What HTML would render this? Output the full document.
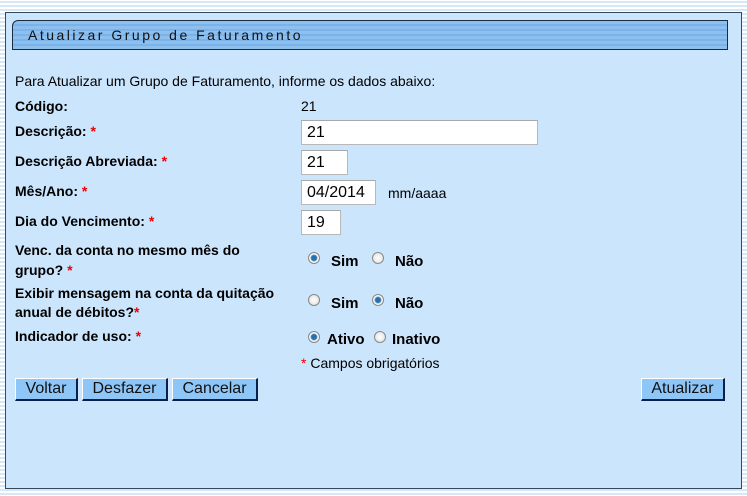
<!DOCTYPE html>
<html><head><meta charset="utf-8"><style>
*{margin:0;padding:0;box-sizing:border-box}
body{width:747px;height:496px;overflow:hidden;position:relative;font-family:"Liberation Sans",Arial,sans-serif;
background:repeating-linear-gradient(#fff 0 1px,#d6e8f7 1px 3px,#fff 3px 4px)}
#p{position:absolute;left:5px;top:12px;width:737px;height:477px;background:#cbe5fc;border:1px solid #33485e}
#h{position:absolute;left:12px;top:20px;width:716px;height:30px;border:1px solid #1d2c3c;border-radius:6px 0 0 0;
background:repeating-linear-gradient(#8ec0ef 0 3px,#7ab2ea 3px 5px)}
#h span{position:absolute;left:15px;top:6px;font-size:14px;letter-spacing:2.5px;color:#111}
.t{position:absolute;font-size:14px;color:#000;white-space:nowrap}
.b{font-weight:bold}
.r{color:#e00}
.in{position:absolute;height:25px;background:#fff;border:1px solid #b8b8b8;border-top-color:#a8a8a8;font-size:16px;padding:3px 0 0 5px}
.rd{position:absolute;width:12px;height:12px;border-radius:50%;border:1px solid #888;background:radial-gradient(circle,#fff,#ddd)}
.rd.on{background:radial-gradient(circle,#2a6fa8 0 2.5px,#6aa4d4 3px,#fff 4px,#ddd)}
.btn{position:absolute;top:378px;height:23px;background:#8fc6f8;border:1px solid #fff;border-right:2px solid #0a1f4d;border-bottom:2px solid #0a1f4d;font-size:16px;text-align:center;line-height:20px;color:#111}
</style></head><body>
<div id="p"></div>
<div id="h"><span>Atualizar Grupo de Faturamento</span></div>
<div class="t" style="left:15px;top:73px">Para Atualizar um Grupo de Faturamento, informe os dados abaixo:</div>
<div class="t b" style="left:15px;top:98px">Código:</div>
<div class="t" style="left:301px;top:98px">21</div>
<div class="t b" style="left:15px;top:123px">Descrição: <span class="r">*</span></div>
<div class="in" style="left:301px;top:120px;width:237px">21</div>
<div class="t b" style="left:15px;top:153px">Descrição Abreviada: <span class="r">*</span></div>
<div class="in" style="left:301px;top:150px;width:47px">21</div>
<div class="t b" style="left:15px;top:183px">Mês/Ano: <span class="r">*</span></div>
<div class="in" style="left:301px;top:180px;width:75px">04/2014</div>
<div class="t" style="left:388px;top:185px">mm/aaaa</div>
<div class="t b" style="left:15px;top:213px">Dia do Vencimento: <span class="r">*</span></div>
<div class="in" style="left:301px;top:210px;width:40px">19</div>
<div class="t b" style="left:15px;top:240px;line-height:20px">Venc. da conta no mesmo mês do<br>grupo? <span class="r">*</span></div>
<div class="rd on" style="left:308px;top:252px"></div><div class="t b" style="left:331px;top:253px;font-size:15px">Sim</div>
<div class="rd" style="left:372px;top:252px"></div><div class="t b" style="left:395px;top:253px;font-size:15px">Não</div>
<div class="t b" style="left:15px;top:284px;line-height:19px">Exibir mensagem na conta da quitação<br>anual de débitos?<span class="r">*</span></div>
<div class="rd" style="left:308px;top:294px"></div><div class="t b" style="left:331px;top:295px;font-size:15px">Sim</div>
<div class="rd on" style="left:372px;top:294px"></div><div class="t b" style="left:395px;top:295px;font-size:15px">Não</div>
<div class="t b" style="left:15px;top:328px">Indicador de uso: <span class="r">*</span></div>
<div class="rd on" style="left:308px;top:331px"></div><div class="t b" style="left:327px;top:331px;font-size:15px">Ativo</div>
<div class="rd" style="left:374px;top:331px"></div><div class="t b" style="left:392px;top:331px;font-size:15px">Inativo</div>
<div class="t" style="left:301px;top:355px"><span class="r">*</span> Campos obrigatórios</div>
<div class="btn" style="left:15px;width:63px">Voltar</div>
<div class="btn" style="left:82px;width:86px">Desfazer</div>
<div class="btn" style="left:172px;width:86px">Cancelar</div>
<div class="btn" style="left:641px;width:84px">Atualizar</div>
</body></html>
